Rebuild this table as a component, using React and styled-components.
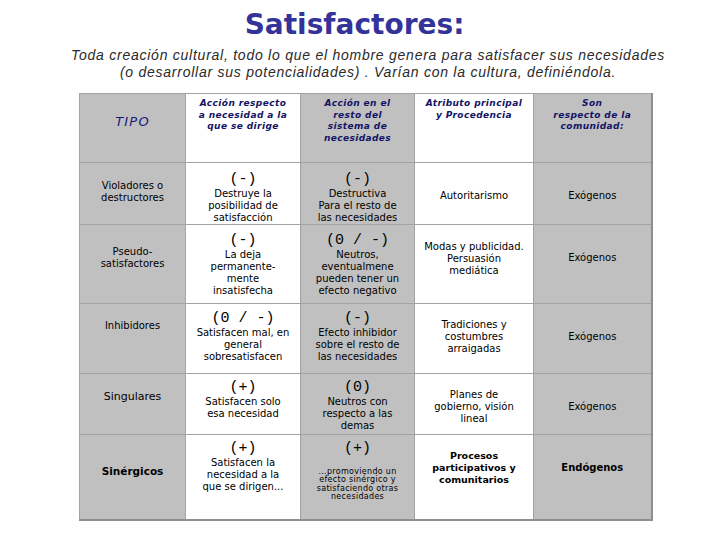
import React from 'react';
import styled, { createGlobalStyle } from 'styled-components';

const GlobalStyle = createGlobalStyle`
  html, body {
    margin: 0;
    padding: 0;
    background: #ffffff;
  }
  body {
    font-family: "DejaVu Sans", Verdana, sans-serif;
    color: #000;
  }
`;

const Page = styled.div`
  width: 720px;
  height: 540px;
  overflow: hidden;
  display: flex;
  flex-direction: column;
`;

const Title = styled.h1`
  margin: 9px 0 0;
  padding-right: 11px;
  text-align: center;
  font-family: "DejaVu Sans", Verdana, sans-serif;
  font-weight: bold;
  font-size: 28px;
  line-height: 32px;
  color: #333399;
`;

const Subtitle = styled.p`
  margin: 6px 0 0;
  padding-left: 16px;
  text-align: center;
  font-family: "Liberation Sans", Arial, sans-serif;
  font-style: italic;
  font-size: 14px;
  line-height: 17px;
  letter-spacing: 0.75px;
  color: #2a2a2a;
`;

const Table = styled.table`
  margin: 12px 0 0 79px;
  width: 572px;
  table-layout: fixed;
  border-collapse: collapse;
  border-top: 1px solid #a9a9a9;
  border-left: 1px solid #a9a9a9;
  border-right: 2px solid #8e8e8e;
  border-bottom: 2px solid #8e8e8e;
`;

const Row = styled.tr`
  height: ${(p) => p.$h}px;
`;

const Cell = styled.td`
  vertical-align: top;
  text-align: center;
  padding: ${(p) => p.$pt}px 2px 0;
  border: 1px solid #a3a3a3;
  background: ${(p) => (p.$gray ? '#c0c0c0' : '#ffffff')};
  font-size: ${(p) => p.$size || 10}px;
  line-height: ${(p) => (p.$size && p.$size > 10 ? 13 : 12)}px;
  font-weight: ${(p) => (p.$bold ? 'bold' : 'normal')};
  overflow: hidden;
`;

const HeadText = styled.div`
  font-family: "DejaVu Sans", Verdana, sans-serif;
  font-weight: bold;
  font-style: italic;
  font-size: 9px;
  line-height: 11.7px;
  letter-spacing: 0.4px;
  color: #141466;
`;

const Tipo = styled.div`
  font-family: "DejaVu Sans", Verdana, sans-serif;
  font-style: italic;
  font-size: 13px;
  line-height: 16px;
  letter-spacing: 1.2px;
  color: #1a1a7a;
`;

const Sym = styled.div`
  font-family: "Liberation Mono", "Courier New", monospace;
  font-size: 15px;
  line-height: 15px;
  margin-bottom: 1px;
  white-space: pre;
`;

const Small = styled.div`
  font-size: 8px;
  line-height: 8.4px;
  letter-spacing: 0.3px;
  margin-top: 12px;
`;

const Lines = ({ lines }) =>
  lines.map((l, i) => (
    <React.Fragment key={i}>
      {i > 0 && <br />}
      {l}
    </React.Fragment>
  ));

const headers = [
  ['Acción respecto', 'a necesidad a la', 'que se dirige'],
  ['Acción en el', 'resto del', 'sistema de', 'necesidades'],
  ['Atributo principal', 'y Procedencia'],
  ['Son', 'respecto de la', 'comunidad:'],
];

const rows = [
  {
    h: 61,
    pt: [17, 9, 9, 27, 27],
    tipo: ['Violadores o', 'destructores'],
    a: { sym: '(-)', lines: ['Destruye la', 'posibilidad de', 'satisfacción'] },
    b: { sym: '(-)', lines: ['Destructiva', 'Para el resto de', 'las necesidades'] },
    attr: ['Autoritarismo'],
    son: 'Exógenos',
  },
  {
    h: 79,
    pt: [21, 8, 8, 16, 27],
    tipo: ['Pseudo-', 'satisfactores'],
    a: { sym: '(-)', lines: ['La deja', 'permanente-', 'mente', 'insatisfecha'] },
    b: { sym: '(0 / -)', lines: ['Neutros,', 'eventualmene', 'pueden tener un', 'efecto negativo'] },
    attr: ['Modas y publicidad.', 'Persuasión', 'mediática'],
    son: 'Exógenos',
  },
  {
    h: 70,
    pt: [16, 7, 7, 15, 27],
    tipo: ['Inhibidores'],
    a: { sym: '(0 / -)', lines: ['Satisfacen mal, en', 'general', 'sobresatisfacen'] },
    b: { sym: '(-)', lines: ['Efecto inhibidor', 'sobre el resto de', 'las necesidades'] },
    attr: ['Tradiciones y', 'costumbres', 'arraigadas'],
    son: 'Exógenos',
  },
  {
    h: 61,
    pt: [16, 6, 6, 15, 27],
    tipo: ['Singulares'],
    tipoSize: 11,
    a: { sym: '(+)', lines: ['Satisfacen solo', 'esa necesidad'] },
    b: { sym: '(0)', lines: ['Neutros con', 'respecto a las', 'demas'] },
    attr: ['Planes de', 'gobierno, visión', 'lineal'],
    son: 'Exógenos',
  },
  {
    h: 85,
    pt: [30, 6, 6, 15, 27],
    tipo: ['Sinérgicos'],
    tipoSize: 10.5,
    bold: true,
    a: { sym: '(+)', lines: ['Satisfacen la', 'necesidad a la', 'que se dirigen...'] },
    b: {
      sym: '(+)',
      small: true,
      lines: ['...promoviendo un', 'efecto sinérgico y', 'satisfaciendo otras', 'necesidades'],
    },
    attr: ['Procesos', 'participativos y', 'comunitarios'],
    son: 'Endógenos',
  },
];

const gray = [true, false, true, false, true];

export default function App() {
  return (
    <Page>
      <GlobalStyle />
      <Title>Satisfactores:</Title>
      <Subtitle>
        Toda creación cultural, todo lo que el hombre genera para satisfacer sus necesidades
        <br />
        (o desarrollar sus potencialidades) . Varían con la cultura, definiéndola.
      </Subtitle>
      <Table>
        <colgroup>
          <col style={{ width: 106 }} />
          <col style={{ width: 115 }} />
          <col style={{ width: 114 }} />
          <col style={{ width: 119 }} />
          <col style={{ width: 118 }} />
        </colgroup>
        <tbody>
          <Row $h={69}>
            <Cell $gray $pt={20}>
              <Tipo>TIPO</Tipo>
            </Cell>
            {headers.map((h, i) => (
              <Cell key={i} $gray={gray[i + 1]} $pt={4}>
                <HeadText>
                  <Lines lines={h} />
                </HeadText>
              </Cell>
            ))}
          </Row>
          {rows.map((r, i) => (
            <Row key={i} $h={r.h}>
              <Cell $gray $pt={r.pt[0]} $size={r.tipoSize} $bold={r.bold}>
                <Lines lines={r.tipo} />
              </Cell>
              <Cell $pt={r.pt[1]}>
                <Sym>{r.a.sym}</Sym>
                <Lines lines={r.a.lines} />
              </Cell>
              <Cell $gray $pt={r.pt[2]}>
                <Sym>{r.b.sym}</Sym>
                {r.b.small ? (
                  <Small>
                    <Lines lines={r.b.lines} />
                  </Small>
                ) : (
                  <Lines lines={r.b.lines} />
                )}
              </Cell>
              <Cell $pt={r.pt[3]} $bold={r.bold} $size={r.bold ? 9.5 : undefined}>
                <Lines lines={r.attr} />
              </Cell>
              <Cell $gray $pt={r.pt[4]} $bold={r.bold}>
                {r.son}
              </Cell>
            </Row>
          ))}
        </tbody>
      </Table>
    </Page>
  );
}
